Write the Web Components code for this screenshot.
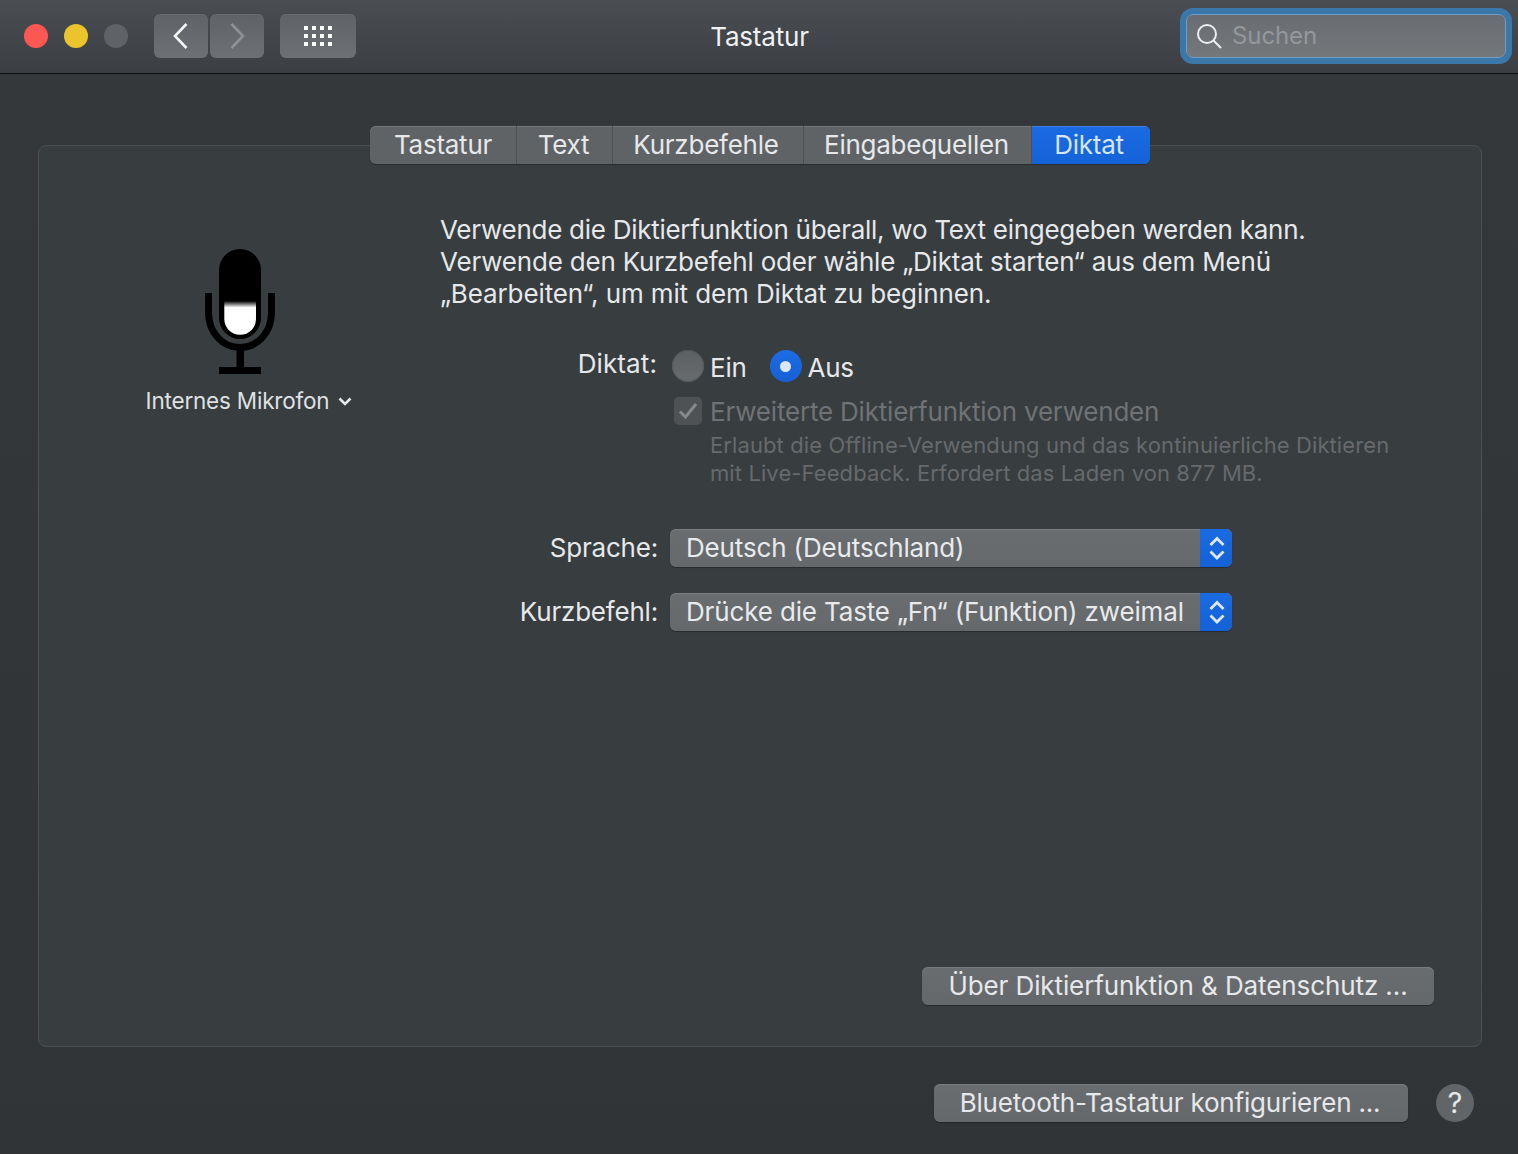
<!DOCTYPE html>
<html lang="de"><head><meta charset="utf-8"><title>Tastatur</title>
<style>
html,body{margin:0;padding:0;background:#313538;}
body{font-family:Inter,"Liberation Sans",sans-serif;color:#e6e8ea;}
</style></head><body>
<mac-window>
  <title-bar slot="bar">Tastatur</title-bar>
  <pref-panel>
    <seg-tabs slot="tabs"></seg-tabs>
    <mic-source slot="left"></mic-source>
    <p-text><span style="letter-spacing:-.27px">Verwende die Diktierfunktion überall, wo Text eingegeben werden kann.</span><br>Verwende den Kurzbefehl oder wähle „Diktat starten“ aus dem Menü<br><span style="letter-spacing:-.11px">„Bearbeiten“, um mit dem Diktat zu beginnen.</span></p-text>
    <form-row label="Diktat:" mt="38" kind="radio">
      <radio-btn style="margin-left:2px">Ein</radio-btn>
      <radio-btn on style="margin-left:23px">Aus</radio-btn>
    </form-row>
    <check-row>Erweiterte Diktierfunktion verwenden
      <span slot="desc">Erlaubt die Offline-Verwendung und das kontinuierliche Diktieren<br>mit Live-Feedback. Erfordert das Laden von 877 MB.</span>
    </check-row>
    <form-row label="Sprache:" mt="42"><popup-select>Deutsch (Deutschland)</popup-select></form-row>
    <form-row label="Kurzbefehl:" mt="26"><popup-select>Drücke die Taste „Fn“ (Funktion) zweimal</popup-select></form-row>
    <push-button slot="action" w="512" ls="-.1">Über Diktierfunktion &amp; Datenschutz ...</push-button>
  </pref-panel>
  <window-footer>
    <push-button w="474" ls="-.2" style="padding-right:2px">Bluetooth-Tastatur konfigurieren ...</push-button>
    <help-button></help-button>
  </window-footer>
</mac-window>
<script>
function def(name, css, html, init){
  customElements.define(name, class extends HTMLElement{
    connectedCallback(){
      if(this.shadowRoot) return;
      const r=this.attachShadow({mode:'open'});
      r.innerHTML='<style>'+css+'</style>'+html;
      if(init) init(this,r);
    }
  });
}
def('mac-window',':host{display:flex;flex-direction:column;width:1518px;height:1154px;overflow:hidden;background:linear-gradient(#34383b,#303437);}','<slot name="bar"></slot><slot></slot>');

def('title-bar',`:host{display:grid;grid-template-columns:minmax(0,1fr) auto minmax(0,1fr);align-items:center;height:71px;border-bottom:1px solid #0c0d0e;background:linear-gradient(#4a4d52,#3b3e42);padding:0 12px 2px 24px;box-sizing:content-box;width:1482px;font-size:26px;line-height:32px;color:#f0f1f2;letter-spacing:-.2px}
.l{display:flex;align-items:center}
.d{width:24px;height:24px;border-radius:50%;margin-right:16px;flex:none}
.nb{height:44px;border-radius:6px;background:linear-gradient(#5f6266,#6d7074);display:flex;align-items:center;justify-content:center;box-shadow:inset 0 1px 0 rgba(255,255,255,.06);flex:none}
.t{margin-right:11px;padding-top:2px}
.r{display:flex;justify-content:flex-end}
.s{width:320px;height:44px;box-sizing:border-box;border-radius:7px;background:linear-gradient(#696c70,#75787b);border:1px solid #6f9fc9;box-shadow:0 0 0 6px #3b78aa;display:flex;align-items:center;padding-left:9px;font-size:24px;color:#95989b;letter-spacing:-.1px}
.s svg{margin-right:10px}
`,`<div class="l">
<span class="d" style="background:#fc5753"></span><span class="d" style="background:#ebc42d"></span><span class="d" style="background:#5f6266;margin-right:26px"></span>
<span class="nb" style="width:54px;margin-right:2px"><svg width="18" height="28" viewBox="0 0 18 28"><path d="M14.500 2 3 14l11.500 12" fill="none" stroke="#f4f5f6" stroke-width="2.600"/></svg></span>
<span class="nb" style="width:54px;margin-right:16px"><svg width="18" height="28" viewBox="0 0 18 28"><path d="M3.500 2 15 14 3.500 26" fill="none" stroke="#8f9295" stroke-width="2.600"/></svg></span>
<span class="nb" style="width:76px"><svg width="28" height="20" viewBox="0 0 28 20" fill="#fff"><path d="M0 0h4v4H0zM8 0h4v4H8zM16 0h4v4h-4zM24 0h4v4h-4zM0 8h4v4H0zM8 8h4v4H8zM16 8h4v4h-4zM24 8h4v4h-4zM0 16h4v4H0zM8 16h4v4H8zM16 16h4v4h-4zM24 16h4v4h-4z"/></svg></span>
</div><div class="t"><slot></slot></div><div class="r"><div class="s"><svg width="26" height="26" viewBox="0 0 26 26" fill="none" stroke="#eceef0" stroke-width="2"><circle cx="11" cy="11" r="9"/><path d="M17.500 17.500 25 25"/></svg><span>Suchen</span></div></div>`);

def('pref-panel',`:host{display:flex;flex-direction:column;box-sizing:border-box;width:1444px;height:902px;margin:71px 0 0 38px;border:1px solid #4b4f52;border-radius:8px;background:#383d40}
.tabs{display:flex;justify-content:center;margin-top:-20px}
.main{display:grid;grid-template-columns:401px 1fr;flex:1}
.left{padding-top:85px}
.right{padding-top:50px}
.act{display:flex;justify-content:flex-end;padding:0 47px 41px 0}
`,`<div class="tabs"><slot name="tabs"></slot></div><div class="main"><div class="left"><slot name="left"></slot></div><div class="right"><slot></slot></div></div><div class="act"><slot name="action"></slot></div>`);

def('seg-tabs',`:host{display:flex;height:38px;border-radius:6px;overflow:hidden;background:#5f6366;box-shadow:inset 0 1px 0 #75797b, 0 1px 1px rgba(0,0,0,.25);font-size:26px;line-height:38px;color:#e6e8ea;letter-spacing:-.25px}
.t{display:flex;align-items:center;justify-content:center;border-right:1px solid #4d5154;box-sizing:border-box;white-space:nowrap;padding-bottom:1px}
.sel{background:linear-gradient(#1a6ae2,#1563d8);color:#d6e5fb;border:0;box-shadow:inset 0 1px 0 #3c80e6}
`,['Tastatur:147:0','Text:96:2','Kurzbefehle:191:4','Eingabequellen:228:2','Diktat:118:4'].map((s,i)=>{const[a,b,c]=s.split(':');return `<div class="t${i==4?' sel':''}" style="width:${b}px;padding-right:${c}px">${a}</div>`}).join(''));

def('mic-source',`:host{display:flex;flex-direction:column;align-items:center;font-size:22.500px;line-height:28px;color:#dfe1e3;letter-spacing:-.2px}
svg{display:block}
.lb{display:flex;align-items:center;margin-top:13px;margin-left:19px;white-space:nowrap}
.lb svg{margin-left:9px;margin-top:1px}
`,`<svg width="70" height="125" viewBox="205 249 70 125">
<defs><linearGradient id="g" x1="0" y1="301" x2="0" y2="334" gradientUnits="userSpaceOnUse"><stop offset="0" stop-color="#000"/><stop offset=".2" stop-color="#fff"/><stop offset="1" stop-color="#fff"/></linearGradient></defs>
<path d="M219 270a21 21 0 0 1 42 0v48a21 21 0 0 1-42 0z" fill="#000"/>
<path d="M224.300 301h31.700v18a15.850 15.850 0 0 1-31.700 0z" fill="url(#g)"/>
<path d="M208.500 293v19.500c0 20 14 35 31.500 35s31.500-15 31.500-35V293" fill="none" stroke="#000" stroke-width="7"/>
<path d="M236.500 347h7.500v20h-7.500zM219 367h42v7h-42z" fill="#000"/>
</svg><div class="lb">Internes Mikrofon<svg width="14" height="9" viewBox="0 0 14 9"><path d="M1.500 1.500 7 7l5.500-5.500" fill="none" stroke="#e6e8ea" stroke-width="2.600"/></svg></div>`);

def('p-text',`:host{display:block;font-size:26px;line-height:32px;color:#e6e8ea;white-space:nowrap;letter-spacing:-.2px}`,`<slot></slot>`);

def('form-row',`:host{display:grid;grid-template-columns:218px 1fr;column-gap:12px;align-items:center;font-size:26px;color:#e6e8ea;letter-spacing:-.2px}
.lab{text-align:right;line-height:32px;white-space:nowrap}
.c{display:flex;align-items:center;letter-spacing:-.15px}
`,`<div class="lab"></div><div class="c"><slot></slot></div>`,(h,r)=>{
  r.querySelector('.lab').textContent=h.getAttribute('label');
  h.style.marginTop=h.getAttribute('mt')+'px';
  if(h.getAttribute('kind')=='radio'){const l=r.querySelector('.lab');l.style.marginBottom='4px';l.style.letterSpacing='.1px';l.style.marginLeft='-1px';l.style.paddingRight='1px';}
});

def('radio-btn',`:host{display:inline-flex;align-items:center;line-height:32px;white-space:nowrap;letter-spacing:-.25px}
.b{width:32px;height:32px;border-radius:50%;box-sizing:border-box;background:linear-gradient(#5c6063,#696c6f);box-shadow:inset 0 0 0 1px #55595c;display:flex;align-items:center;justify-content:center;margin-right:6px}
.t{position:relative;top:2px}
:host([on]) .b{background:linear-gradient(#1c6ce4,#1560d4);box-shadow:none}
:host([on]) .b::after{content:"";width:11px;height:11px;border-radius:50%;background:#dbe8fb}
`,`<span class="b"></span><span class="t"><slot></slot></span>`);

def('check-row',`:host{display:grid;grid-template-columns:36px 1fr;margin:13px 0 0 234px;font-size:26px;line-height:30px;color:#6f7376;letter-spacing:-.2px}
.b{width:28px;height:28px;border-radius:5px;background:#4e5255;display:flex;align-items:center;justify-content:center;margin-top:0}
.d{grid-column:2;font-size:22px;line-height:28px;color:#666a6d;white-space:nowrap;letter-spacing:.1px;margin-top:4px}
.t{white-space:nowrap}
`,`<div class="b"><svg width="20" height="18" viewBox="0 0 20 18"><path d="M2 9.500 7.500 15 18 2" fill="none" stroke="#85898b" stroke-width="3"/></svg></div><div class="t"><slot></slot></div><div class="d"><slot name="desc"></slot></div>`);

def('popup-select',`:host{display:flex;width:562px;height:38px;box-sizing:border-box;border-radius:6px;overflow:hidden;background:linear-gradient(#696d6f,#65696b);box-shadow:inset 0 1px 0 #7a7e80,0 1px 1px rgba(0,0,0,.3);font-size:26px;line-height:38px;color:#e8eaec;letter-spacing:-.15px}
.t{flex:1;padding-left:16px;white-space:nowrap;line-height:38px}
.a{width:32px;background:linear-gradient(#1a6be2,#1561d6);display:flex;align-items:center;justify-content:center;padding-left:1px;box-sizing:border-box}
`,`<div class="t"><slot></slot></div><div class="a"><svg width="18" height="30" viewBox="0 0 18 30" fill="none" stroke="#dbe8fb" stroke-width="2.800"><path d="M2.500 12 9 5.500l6.500 6.500M2.500 18.500 9 25l6.500-6.500"/></svg></div>`);

def('push-button',`:host{display:flex;align-items:center;justify-content:center;height:38px;box-sizing:border-box;border-radius:6px;background:linear-gradient(#6a6d70,#65686b);box-shadow:inset 0 1px 0 #787c7e,0 1px 1px rgba(0,0,0,.3);font-size:26px;line-height:36px;color:#e6e8ea;white-space:nowrap;padding-bottom:1px}`,`<slot></slot>`,h=>{h.style.width=h.getAttribute('w')+'px';h.style.letterSpacing=h.getAttribute('ls')+'px'});

def('help-button',`:host{display:flex;align-items:center;justify-content:center;width:38px;height:38px;border-radius:50%;background:#616568;font-size:29px;color:#e6e8ea;line-height:38px}`,`?`);

def('window-footer',`:host{display:flex;justify-content:flex-end;align-items:center;gap:28px;margin-top:37px;padding-right:44px}`,`<slot></slot>`);
</script>
</body></html>
